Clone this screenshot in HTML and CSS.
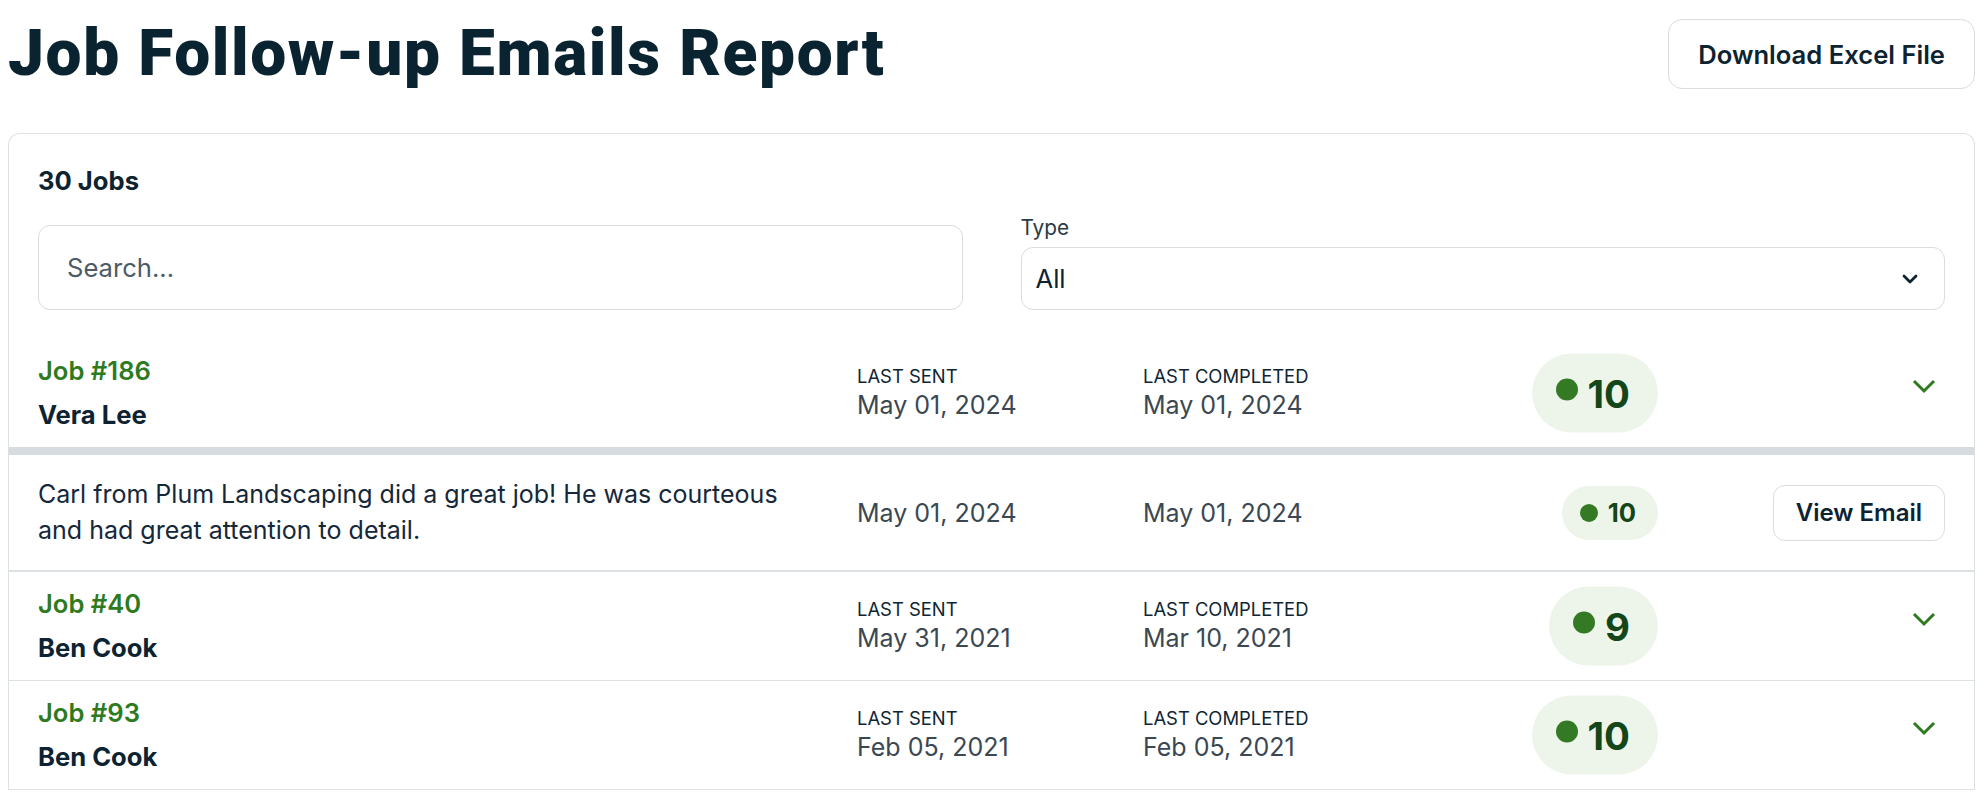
FILE: index.html
```html
<!DOCTYPE html>
<html lang="en">
<head>
    <meta charset="UTF-8">
    <title>Job Follow-up Emails Report</title>
    <link rel="stylesheet" href="styles.css">
</head>
<body>
<div class="page">
    <!-- page header -->
    <div class="top">
        <h1 class="title">Job Follow-up Emails Report</h1>
        <button class="btn btn-big">Download Excel File</button>
    </div>

    <div class="card">
        <div class="card-head">
            <div class="count">30 Jobs</div>
            <div class="filters">
                <div class="search">Search...</div>
                <div class="field">
                    <div class="field-label">Type</div>
                    <div class="select">
                        <span>All</span>
                        <svg width="20" height="14" viewBox="0 0 20 14"><polyline points="4,4 10,10 16,4" fill="none" stroke="#0d2331" stroke-width="2.8" stroke-linecap="round" stroke-linejoin="round"/></svg>
                    </div>
                </div>
            </div>
        </div>

        <!-- job rows -->
        <div class="row row-open">
            <div class="who">
                <div class="job">Job #186</div>
                <div class="name">Vera Lee</div>
            </div>
            <div class="when"><div class="cap">Last Sent</div><div class="date">May 01, 2024</div></div>
            <div class="when when-last"><div class="cap">Last Completed</div><div class="date">May 01, 2024</div><span class="badge"><i class="dot"></i>10</span></div>
            <div class="act"><span class="toggle"><svg width="24" height="24" viewBox="0 0 24 24"><polyline points="2,3 12,13 22,3" fill="none" stroke="#2e7a1f" stroke-width="3"/></svg></span></div>
        </div>
        <div class="row row-mail">
            <div class="msg">Carl from Plum Landscaping did a great job! He was courteous and had great attention to detail.</div>
            <div class="when"><div class="date">May 01, 2024</div></div>
            <div class="when when-last"><div class="date">May 01, 2024</div><span class="badge badge-sm"><i class="dot"></i>10</span></div>
            <div class="act"><button class="btn btn-small">View Email</button></div>
        </div>
        <div class="row">
            <div class="who">
                <div class="job">Job #40</div>
                <div class="name">Ben Cook</div>
            </div>
            <div class="when"><div class="cap">Last Sent</div><div class="date">May 31, 2021</div></div>
            <div class="when when-last"><div class="cap">Last Completed</div><div class="date">Mar 10, 2021</div><span class="badge"><i class="dot"></i>9</span></div>
            <div class="act"><span class="toggle"><svg width="24" height="24" viewBox="0 0 24 24"><polyline points="2,3 12,13 22,3" fill="none" stroke="#2e7a1f" stroke-width="3"/></svg></span></div>
        </div>
        <div class="row">
            <div class="who">
                <div class="job">Job #93</div>
                <div class="name">Ben Cook</div>
            </div>
            <div class="when"><div class="cap">Last Sent</div><div class="date">Feb 05, 2021</div></div>
            <div class="when when-last"><div class="cap">Last Completed</div><div class="date">Feb 05, 2021</div><span class="badge"><i class="dot"></i>10</span></div>
            <div class="act"><span class="toggle"><svg width="24" height="24" viewBox="0 0 24 24"><polyline points="2,3 12,13 22,3" fill="none" stroke="#2e7a1f" stroke-width="3"/></svg></span></div>
        </div>
    </div>
</div>
</body>
</html>
```

FILE: styles.css
```css
*{ margin:0; padding:0; box-sizing:border-box; }
html,body{ overflow:hidden; }
body{ font-family:Inter, "Noto Sans", sans-serif; font-size:25px; color:#0d2331; background:#fff; }
.page{ padding:19px 9px 0 8px; }

/* header */
.top{ display:flex; justify-content:space-between; align-items:center; height:70px; margin-bottom:44px; }
.title{ font-family:Roboto, "Liberation Sans", sans-serif; font-weight:900; font-size:64px; line-height:70px; color:#0a2330; letter-spacing:1.6px; }
.btn{ font-family:Inter, sans-serif; font-weight:600; color:#0d2331; background:#fff; border:1px solid #d7dde1; cursor:pointer; }
.btn-big{ height:70px; padding:0 29px; font-size:25.6px; border-radius:14px; }
.btn-small{ height:56px; padding:0 22px; font-size:24px; border-radius:12px; }

/* card (runs on past the bottom of the window) */
.card{ border:1px solid #dce1e4; border-bottom:0; border-radius:12px 12px 0 0; }
.card-head{ padding:30px 29px 29px; }
.count{ font-weight:700; font-size:25.6px; line-height:33px; }
.filters{ display:grid; grid-template-columns:1fr 1fr; gap:58px; align-items:end; margin-top:18px; }
.search{ height:85px; border:1px solid #d7dde1; border-radius:12px; padding:0 28px; display:flex; align-items:center; color:#4c5b66; font-size:25.6px; }
.field-label{ font-size:20.8px; line-height:26px; color:#2c3b45; margin-bottom:6px; }
.select{ height:63px; border:1px solid #d7dde1; border-radius:12px; padding:0 24px 0 14px; display:flex; align-items:center; justify-content:space-between; font-size:25.6px; }

/* rows */
.row{ display:grid; grid-template-columns:1fr 286px 515px 287px; align-items:center; padding:14px 29px; border-bottom:1px solid #dce1e4; }
.row-open{ border-bottom:8px solid #d5dbdf; }
.row-mail{ padding:22px 29px; border-bottom:2px solid #dce1e4; }
.who{ display:flex; flex-direction:column; gap:8px; font-size:25.6px; }
.job{ color:#2e7a1f; font-weight:600; line-height:36px; }
.name{ font-weight:700; line-height:36px; }
.msg{ line-height:35.5px; padding-right:48px; color:#15283a; }
.cap{ font-size:18.4px; line-height:24px; text-transform:uppercase; color:#0f2533; }
.date{ line-height:34px; color:#3b4852; }
.when-last{ position:relative; display:flex; flex-direction:column; }
.when-last .badge{ position:absolute; right:0; top:50%; transform:translateY(-50%); }
.badge{ display:inline-flex; align-items:center; gap:10px; height:79px; padding:0 28px 0 24px; border-radius:40px; background:#edf5ea; color:#15461a; font-weight:700; font-size:38.4px; }
.dot{ width:22px; height:22px; border-radius:50%; background:#347a24; margin-bottom:8px; }
.badge-sm{ height:54px; padding:0 22px 0 18px; font-size:25.6px; gap:10px; }
.badge-sm .dot{ width:18px; height:18px; margin-bottom:0; }
.act{ display:flex; justify-content:flex-end; }
.toggle{ width:42px; height:42px; display:flex; align-items:center; justify-content:center; margin-top:-6px; }
```
